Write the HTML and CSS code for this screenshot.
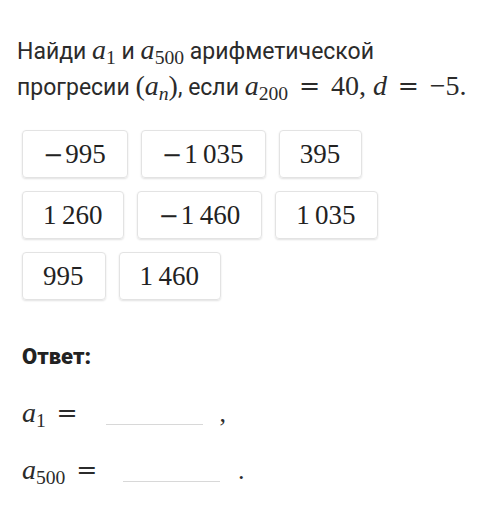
FILE: index.html
```html
<!DOCTYPE html>
<html lang="ru">
<head>
    <meta charset="UTF-8">
    <meta name="viewport" content="width=device-width, initial-scale=1.0">
    <title>Арифметическая прогрессия</title>
    <link rel="stylesheet" href="styles.css">
</head>
<body>
    <div class="task">
        <p class="question">
            Найди <span class="m"><i>a</i><sub>1</sub></span> и <span class="m"><i>a</i><sub>500</sub></span> арифметической<br>
            прогресии <span class="m">(<i>a</i><sub><i>n</i></sub>)</span>, если <span class="m"><i>a</i><sub>200</sub> <span class="rel">=</span> 40, <i>d</i> <span class="rel">=</span> −5.</span>
        </p>

        <div class="chips">
            <div class="chip"><span class="neg">−</span>995</div>
            <div class="chip"><span class="neg">−</span>1&#8201;035</div>
            <div class="chip">395</div>
            <div class="chip">1&#8201;260</div>
            <div class="chip"><span class="neg">−</span>1&#8201;460</div>
            <div class="chip">1&#8201;035</div>
            <div class="chip">995</div>
            <div class="chip">1&#8201;460</div>
        </div>

        <h3 class="answer-title">Ответ:</h3>

        <div class="answer-row row-1"><span class="m ans-var"><i>a</i><sub>1</sub> <span class="rel">=</span></span><span class="blank"></span><span class="m punct">,</span></div>
        <div class="answer-row row-2"><span class="m ans-var"><i>a</i><sub>500</sub> <span class="rel">=</span></span><span class="blank"></span><span class="m punct">.</span></div>
    </div>
</body>
</html>
```

FILE: styles.css
```css
body {
    margin: 0;
    background: #fff;
    color: #2b2b2b;
    font-family: Roboto, "Liberation Sans", sans-serif;
}
.task {
    padding: 33px 17px 0;
}
.question {
    margin: 0;
    font-size: 23px;
    line-height: 34px;
}

/* formula parts */
.m {
    font-family: "Liberation Serif", serif;
    font-size: 1.22em;
    white-space: nowrap;
}
.m i {
    font-style: italic;
}
.m sub {
    font-size: 0.7em;
    vertical-align: -0.25em;
    line-height: 0;
}
.rel {
    font-family: "DejaVu Serif", serif;
    font-size: 0.9em;
    margin: 0 0.15em;
}

/* answer options */
.chips {
    display: flex;
    flex-wrap: wrap;
    gap: 13px;
    margin: 25px 0 0 5px;
    width: 370px;
}
.chip {
    height: 48px;
    box-sizing: border-box;
    display: flex;
    align-items: center;
    padding: 0 21px 0 20px;
    border: 1px solid #e3e3e3;
    border-radius: 4px;
    box-shadow: 0 1px 2px rgba(0, 0, 0, 0.12);
    font-family: "Liberation Serif", serif;
    font-size: 27px;
    color: #222;
}
.neg {
    font-family: "DejaVu Serif", serif;
    font-size: 0.9em;
    margin-right: 2px;
}

.answer-title {
    margin: 44px 0 0 5px;
    font-size: 22px;
    font-weight: 900;
    color: #222;
}

/* answer rows: formula, blank line, punctuation */
.answer-row {
    margin-left: 5px;
    font-size: 22px;
    line-height: 40px;
}
.row-1 {
    margin-top: 24px;
}
.row-2 {
    margin-top: 15px;
}
.ans-var {
    font-size: 28px;
}
.blank {
    display: inline-block;
    width: 97px;
    height: 0;
    border-bottom: 1px solid #d8d8d8;
    vertical-align: -3px;
    margin: 0 16px 0 25px;
}
.row-2 .blank {
    margin: 0 18px 0 22px;
}
.punct {
    font-size: 26px;
}
```
